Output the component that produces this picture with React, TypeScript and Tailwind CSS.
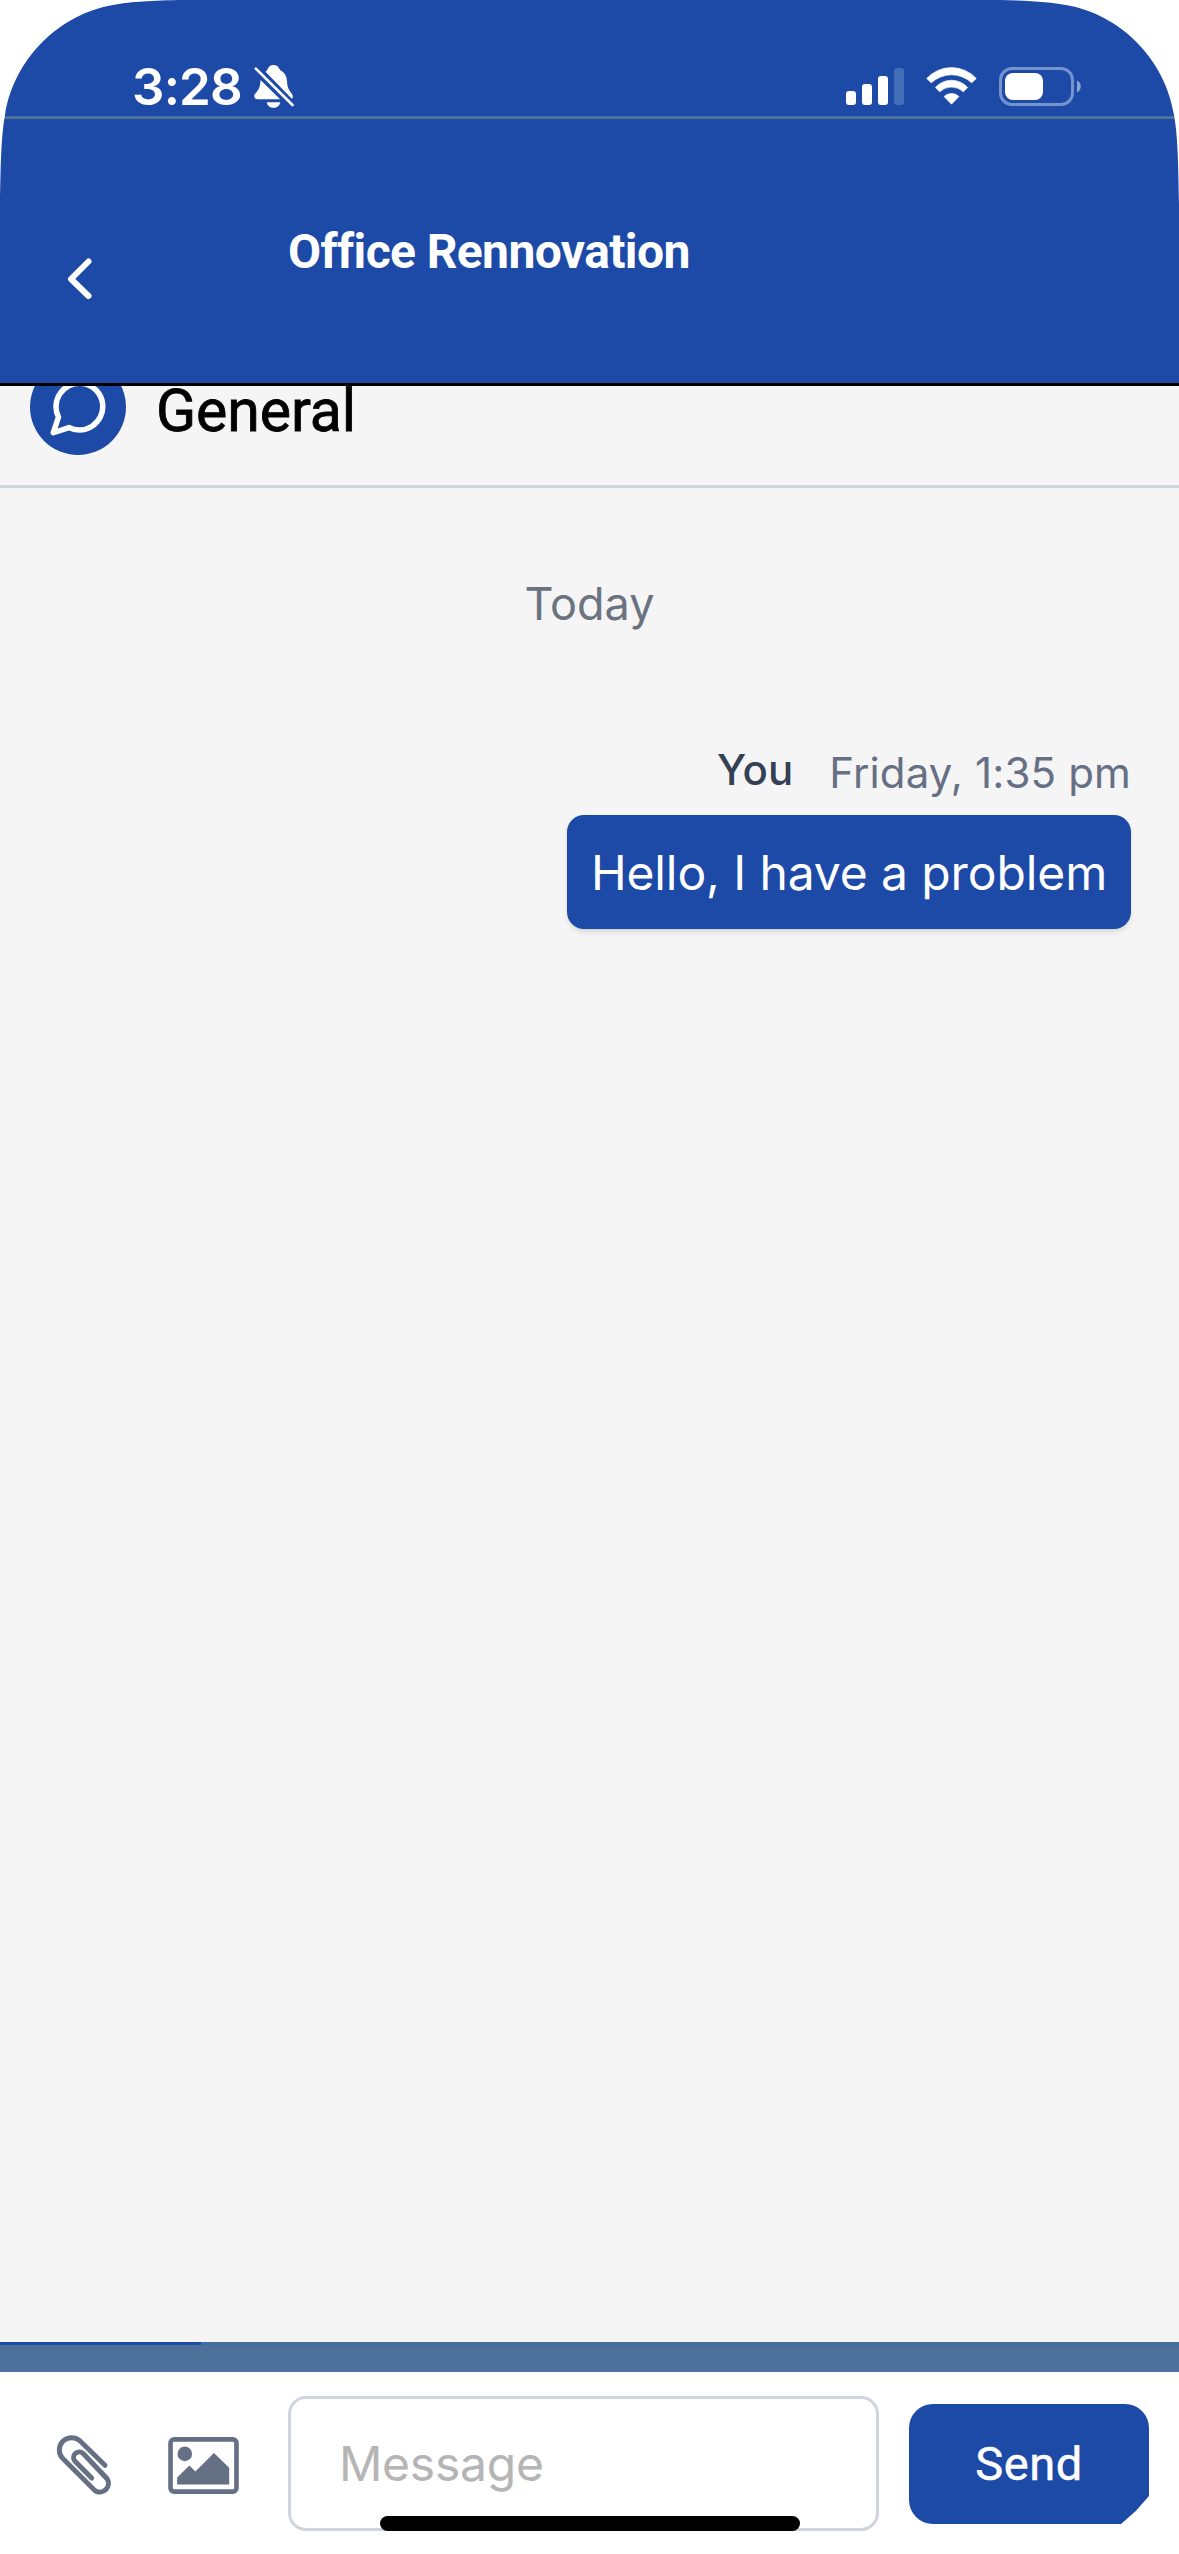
import type { ReactNode } from 'react';
import { FiMessageCircle } from 'react-icons/fi';

const Corner = ({ className }: { className: string }) => (
  <svg viewBox="0 0 200 205" className={`absolute top-0 w-[200px] h-[205px] ${className}`}>
    <path
      d="M0 0H178C146 .8 128 2 113 5C60 14 14 58 5 115C1.5 134 .6 160 0 205Z"
      fill="#fff"
    />
  </svg>
);

const BellOff = () => (
  <svg viewBox="0 0 119 129" className="w-10 h-[43px]" fill="#fff">
    <path d="M34 20C42 16 41 0 58 0C75 0 72 12 82 18C95 26 98 38 99 54C100 78 116 84 116 94Q117 100 113 101Z" />
    <path d="M19 45L78 103H11Q0 102 0 93C2 82 19 78 19 45Z" />
    <path d="M38 112H78C76 134 40 134 38 112Z" />
    <path d="M5 11L115 120" stroke="#fff" strokeWidth="8" strokeLinecap="round" />
  </svg>
);

const Wifi = () => (
  <svg viewBox="0 0 153 113" className="w-[51px] h-[38px]" fill="#fff" stroke="#fff" strokeWidth="2" strokeLinejoin="round">
    <path d="M2 34A101 101 0 0 1 151 34L137 47A88 88 0 0 0 16 47Z" />
    <path d="M28 61A65 65 0 0 1 125 61L112 74A51 51 0 0 0 41 74Z" />
    <path d="M54 88A32 32 0 0 1 99 88L76.500 111Z" />
  </svg>
);

const Battery = () => (
  <svg viewBox="0 0 82 39" className="w-[82px] h-[39px]">
    <rect x="1.500" y="1.500" width="72" height="36" rx="11.500" fill="none" stroke="#7494cd" strokeWidth="3" />
    <rect x="6" y="6" width="38" height="27" rx="8" fill="#fff" />
    <path d="M78 13.500C83 15.500 83 23.500 78 25.500Z" fill="#8aa4d5" />
  </svg>
);

const Paperclip = () => (
  <svg viewBox="0 0 168 186" className="w-14 h-[62px]" fill="none" stroke="#667085" strokeWidth="15">
    <path
      d="M147 94L70 19A37 37 0 0 0 18 71L117 170A26 26 0 0 0 153 134L81 58A17 17 0 0 0 57 82L107 132"
      strokeLinecap="round"
    />
  </svg>
);

const Picture = () => (
  <svg viewBox="0 0 213 172" className="w-[71px] h-[57px]" fill="#667085">
    <rect x="7" y="7" width="199" height="158" rx="11" fill="none" stroke="#667085" strokeWidth="14" />
    <circle cx="50" cy="51" r="22" />
    <path d="M27 122L64 86L82 104L138 48L184 93V143H27Z" />
  </svg>
);

const bars = [
  'h-[14px] bg-white',
  'h-[21px] bg-white',
  'h-[29px] bg-white',
  'h-[37px] bg-[#446db7]',
];

const StatusBar = () => (
  <div className="h-[119px] pt-[57px] pb-px pl-[132px] pr-[98px] flex items-center justify-between border-b-3 border-[#4c719b]">
    <div className="flex items-center gap-[13px]">
      <span className="w-[109px] text-[51px] leading-none font-semibold tracking-[-0.8px] whitespace-nowrap">3:28</span>
      <BellOff />
    </div>
    <div className="flex items-center gap-[22px]">
      <div className="flex items-end gap-[6px]">
        {bars.map((bar) => (
          <span key={bar} className={`w-[10px] rounded-[3px] ${bar}`} />
        ))}
      </div>
      <Wifi />
      <Battery />
    </div>
  </div>
);

const Label = ({ className, children }: { className: string; children: ReactNode }) => (
  <span className={`whitespace-nowrap ${className}`}>{children}</span>
);

const App = () => {
  return (
    <div className="relative w-[1179px] h-[2554px] overflow-hidden flex flex-col bg-[#f5f5f5] font-['Inter',sans-serif]">
      <header className="h-[386px] shrink-0 bg-[#1d4aa7] text-white border-b-3 border-black">
        <StatusBar />
        <div className="flex items-start pl-[66px]">
          <svg viewBox="0 0 28 44" className="mt-[138px] w-7 h-11 shrink-0" fill="none" stroke="#fff" strokeWidth="6" strokeLinecap="round" strokeLinejoin="round">
            <path d="M22.500 4.500L5 22L22.500 39" />
          </svg>
          <h1 className="mt-[105px] ml-[194px] text-[48px] leading-[56px] font-bold tracking-[-0.62px] font-['Roboto',sans-serif] whitespace-nowrap">
            Office Rennovation
          </h1>
        </div>
      </header>

      {/* channel row, its icon scrolled partly under the header */}
      <div className="h-[102px] shrink-0 pl-[30px] flex items-start gap-[30px] border-b-3 border-[#d0d5dd]">
        <div className="h-[69px] overflow-hidden flex items-end">
          <div className="size-24 shrink-0 pt-px rounded-full bg-[#1d4aa7] text-white flex items-center justify-center">
            <FiMessageCircle className="size-[66px]" />
          </div>
        </div>
        <h2 className="text-[59px] leading-[50px] tracking-[-0.1px] [-webkit-text-stroke:0.8px_black] font-['Roboto',sans-serif] text-black">General</h2>
      </div>

      <main className="flex-1 flex flex-col items-end pr-12">
        <p className="self-center ml-12 mt-[86px] text-[45px] leading-[60px] text-[#6b7280]">Today</p>
        <div className="mt-[109px] flex items-baseline">
          <Label className="relative -top-[3px] text-[42px] leading-[60px] font-medium text-[#344054]">You</Label>
          <Label className="ml-9 text-[42px] leading-[60px] tracking-[0.15px] text-[#667085]">Friday, 1:35 pm</Label>
        </div>
        <div className="mt-[12px] w-[564px] h-[114px] pt-[2px] rounded-[17px] bg-[#1d4aa7] text-white flex items-center justify-center shadow-md">
          <Label className="text-[48px] leading-[60px] tracking-[-0.1px]">Hello, I have a problem</Label>
        </div>
      </main>

      <div className="h-[30px] shrink-0 bg-[#4c719b] border-t-3 border-[#426e9c]">
        <div className="-mt-[3px] w-[201px] h-[3px] bg-[#1d4aa7]" />
      </div>

      <footer className="h-[182px] shrink-0 bg-white flex items-start pl-14">
        <div className="mt-[62px]">
          <Paperclip />
        </div>
        <div className="ml-14 mt-[65px]">
          <Picture />
        </div>
        <div className="ml-[49px] mt-6 w-[591px] h-[135px] pl-[48px] rounded-[18px] border-3 border-[#d0d5dd] flex items-center">
          <Label className="text-[48px] leading-[60px] tracking-[-0.25px] text-[#b5b5b5]">Message</Label>
        </div>
        <button className="ml-[30px] mt-8 w-60 h-[120px] rounded-[24px] bg-[#1d4aa7] text-white text-[47px] tracking-[0.6px] [-webkit-text-stroke:0.5px_white] font-['Roboto',sans-serif] [clip-path:polygon(0_0,100%_0,100%_92px,94.500%_107px,212px_100%,0_100%)]">
          Send
        </button>
      </footer>

      <div className="absolute left-[380px] bottom-[23px] w-[420px] h-[15px] rounded-full bg-black" />
      <Corner className="left-0" />
      <Corner className="right-0 -scale-x-100" />
    </div>
  );
};

export default App;
